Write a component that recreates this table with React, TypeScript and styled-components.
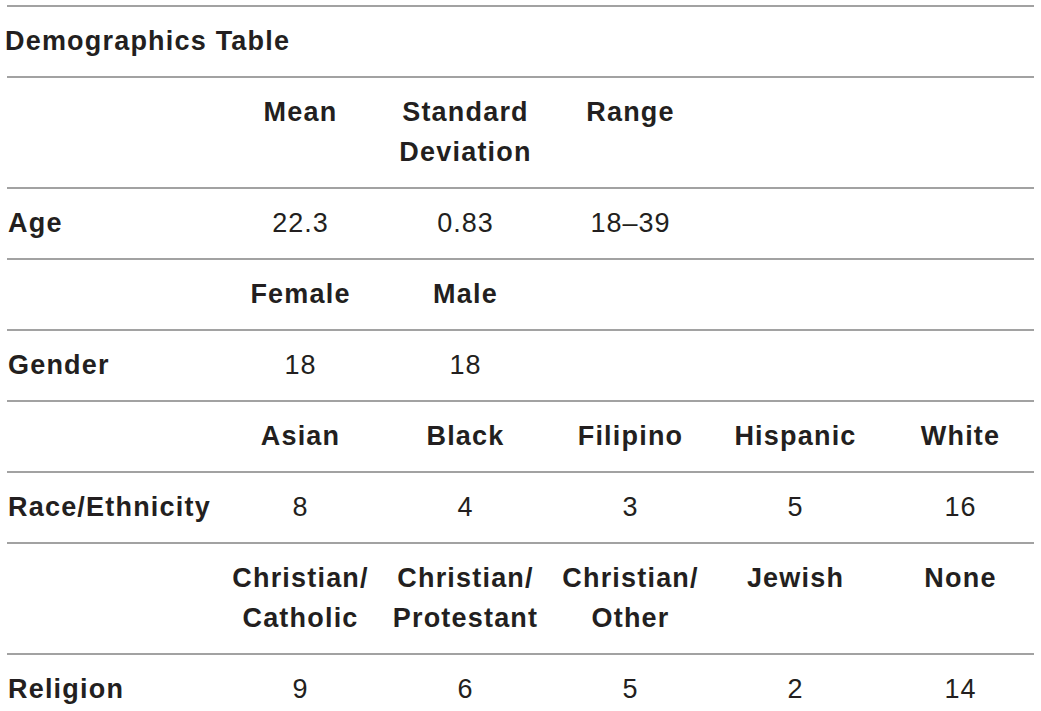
import React from "react";
import styled, { createGlobalStyle } from "styled-components";

const Global = createGlobalStyle`
  html, body { margin: 0; padding: 0; background: #ffffff; }
  body { font-family: "Liberation Sans", Arial, sans-serif; color: #231f20; }
`;

const Page = styled.div`
  padding: 5px 0 0 7px;
  width: 1027px;
`;

const Row = styled.div`
  display: grid;
  grid-template-columns: 211px repeat(5, 165px);
  width: 1027px;
  border-top: 2px solid #a2a2a2;
`;

const Cell = styled.div<{ $head?: boolean; $label?: boolean }>`
  padding: 14px 0 15px;
  line-height: 40px;
  font-size: 27px;
  letter-spacing: ${(p) => (p.$head || p.$label ? "1.2px" : "1px")};
  font-weight: ${(p) => (p.$head || p.$label ? 700 : 400)};
  text-align: ${(p) => (p.$label ? "left" : "center")};
  padding-left: ${(p) => (p.$label ? "1px" : "0")};
  white-space: nowrap;
`;

const Title = styled.div`
  grid-column: 1 / -1;
  padding: 14px 0 15px;
  margin-left: -2px;
  line-height: 40px;
  font-size: 27px;
  letter-spacing: 1.2px;
  font-weight: 700;
`;

type Section = { label: string; heads: React.ReactNode[]; values: string[] };

const sections: Section[] = [
  {
    label: "Age",
    heads: ["Mean", <>Standard<br />Deviation</>, "Range"],
    values: ["22.3", "0.83", "18–39"],
  },
  { label: "Gender", heads: ["Female", "Male"], values: ["18", "18"] },
  {
    label: "Race/Ethnicity",
    heads: ["Asian", "Black", "Filipino", "Hispanic", "White"],
    values: ["8", "4", "3", "5", "16"],
  },
  {
    label: "Religion",
    heads: [
      <>Christian/<br />Catholic</>,
      <>Christian/<br />Protestant</>,
      <>Christian/<br />Other</>,
      "Jewish",
      "None",
    ],
    values: ["9", "6", "5", "2", "14"],
  },
];

export default function App() {
  return (
    <>
      <Global />
      <Page>
        <Row>
          <Title>Demographics Table</Title>
        </Row>
        {sections.map((s) => (
          <React.Fragment key={s.label}>
            <Row>
              <Cell $label />
              {s.heads.map((h, i) => (
                <Cell $head key={i}>{h}</Cell>
              ))}
            </Row>
            <Row>
              <Cell $label>{s.label}</Cell>
              {s.values.map((v, i) => (
                <Cell key={i}>{v}</Cell>
              ))}
            </Row>
          </React.Fragment>
        ))}
      </Page>
    </>
  );
}
